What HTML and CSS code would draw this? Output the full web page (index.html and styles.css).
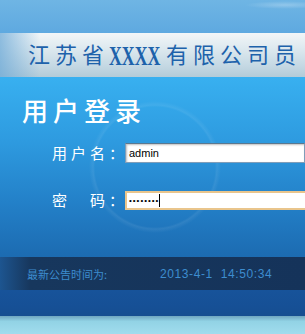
FILE: index.html
```html
<!DOCTYPE html>
<html lang="zh-CN">
<head>
<meta charset="utf-8">
<title>用户登录</title>
<link rel="stylesheet" href="styles.css">
</head>
<body>
<div class="page">
  <div class="sky"></div>
  <div class="titlebar">
    <div class="title">江苏省<span class="xs">XXXX</span>有限公司<span class="last">员</span></div>
  </div>
  <div class="panel">
    <h1 class="heading">用户登录</h1>
    <div class="row row-user">
      <label class="label">用户名：</label>
      <div class="input input-user">admin</div>
    </div>
    <div class="row row-pass">
      <label class="label">密　码：</label>
      <div class="input input-pass"><span class="dots">••••••••</span><span class="caret"></span></div>
    </div>
  </div>
  <div class="notice">
    <span class="notice-label">最新公告时间为:</span>
    <span class="notice-time">2013-4-1&nbsp; 14:50:34</span>
  </div>
  <div class="bottom"></div>
  <div class="ground"></div>
</div>
</body>
</html>
```
FILE: styles.css
```css
html, body {
  margin: 0;
  padding: 0;
}
body {
  width: 305px;
  height: 334px;
  overflow: hidden;
  font-family: "Noto Sans CJK SC", "Noto Sans", sans-serif;
}
.page {
  width: 305px;
  display: flex;
  flex-direction: column;
}
.sky {
  height: 33px;
  background:
    radial-gradient(ellipse at 285px 5px, rgba(255,255,255,0.25) 0px, rgba(255,255,255,0) 40px),
    linear-gradient(180deg, #6fb5e4 0%, #5ea9e0 100%);
}
.titlebar {
  height: 44px;
  box-sizing: border-box;
  padding-left: 28px;
  background:
    linear-gradient(90deg, rgba(110,170,215,0.75) 0px, rgba(110,170,215,0) 40px),
    linear-gradient(180deg, #f2f6f8 0%, #dde9ef 35%, #c4d8e3 75%, #b3cbd8 100%);
  display: flex;
  align-items: center;
  white-space: nowrap;
}
.title {
  font-family: "Noto Sans CJK SC", sans-serif;
  font-size: 22px;
  line-height: 1;
  letter-spacing: 5px;
  color: #1d62ab;
  padding-top: 1px;
}
.last {
  letter-spacing: 0;
}
.xs {
  display: inline-block;
  font-family: "Liberation Serif", serif;
  font-size: 27px;
  font-weight: bold;
  letter-spacing: 0px;
  width: 57px;
  transform: scaleX(0.66);
  transform-origin: left center;
  vertical-align: -2px;
}
.panel {
  height: 180px;
  box-sizing: border-box;
  padding: 19px 0 0 22px;
  background:
    radial-gradient(circle at 155px 90px, rgba(255,255,255,0) 60px, rgba(255,255,255,0.07) 62px, rgba(255,255,255,0) 66px),
    linear-gradient(180deg, #38b0f0 0%, #2e9be0 35%, #2380c8 70%, #1c6bb1 100%);
  display: flex;
  flex-direction: column;
}
.heading {
  margin: 0;
  font-size: 26px;
  line-height: 28px;
  font-weight: 500;
  letter-spacing: 5px;
  color: #ffffff;
}
.row {
  display: flex;
  align-items: center;
  padding-left: 30px;
}
.row-user {
  margin-top: 19px;
}
.row-pass {
  margin-top: 27px;
}
.label {
  width: 73px;
  font-size: 15px;
  line-height: 20px;
  letter-spacing: 4px;
  color: #ffffff;
  white-space: nowrap;
}
.input {
  width: 200px;
  height: 20px;
  box-sizing: border-box;
  background: #ffffff;
  font-family: "Liberation Sans", Arial, sans-serif;
  font-size: 11px;
  line-height: 18px;
  padding-left: 3px;
  color: #000;
  display: flex;
  align-items: center;
}
.input-user {
  border: 1px solid #7f9db9;
  border-top-color: #5a7890;
  box-shadow: inset 1px 1px 2px rgba(0,0,0,0.25);
}
.input-pass {
  height: 19px;
  border: 2px solid #e9c58c;
  border-right: none;
  padding-left: 2px;
}
.dots {
  font-size: 8px;
  letter-spacing: 1px;
  line-height: 15px;
}
.caret {
  width: 1px;
  height: 13px;
  background: #000;
  margin-left: 0;
}
.notice {
  height: 33px;
  box-sizing: border-box;
  padding-left: 27px;
  background:
    linear-gradient(90deg, #1d5590 0px, #17375d 30px, #15335a 100%);
  display: flex;
  align-items: center;
  font-size: 11px;
  color: #3d8dcf;
  white-space: nowrap;
}
.notice-label {
  width: 133px;
}
.notice-time {
  font-family: "Liberation Sans", Arial, sans-serif;
  font-size: 12px;
  letter-spacing: 0.6px;
}
.bottom {
  height: 26px;
  background: linear-gradient(180deg, #17539a 0%, #165096 60%, #164e90 100%);
}
.ground {
  height: 18px;
  background: linear-gradient(180deg, #6fa6bf 0%, #92d3e5 30%, #a1dced 100%);
}
```
